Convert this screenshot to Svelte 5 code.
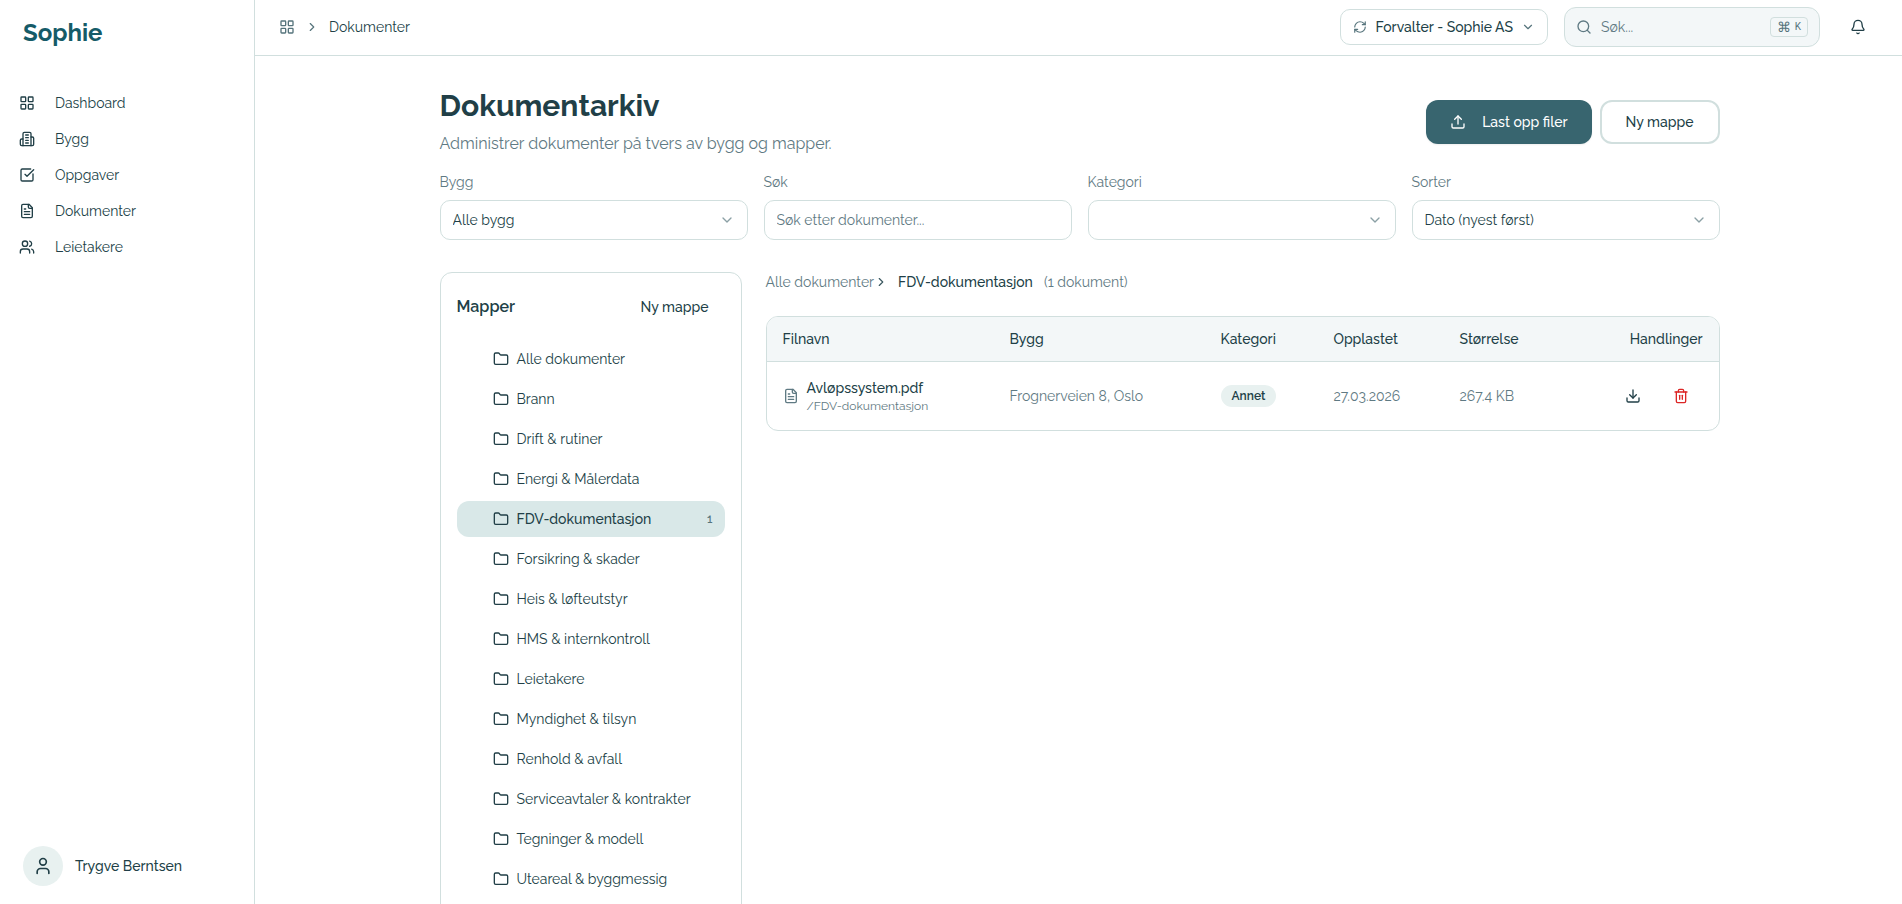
<script>
  const icons = {
    grid: '<rect width="7" height="7" x="3" y="3" rx="1"/><rect width="7" height="7" x="14" y="3" rx="1"/><rect width="7" height="7" x="14" y="14" rx="1"/><rect width="7" height="7" x="3" y="14" rx="1"/>',
    building: '<path d="M6 22V4a2 2 0 0 1 2-2h8a2 2 0 0 1 2 2v18Z"/><path d="M6 12H4a2 2 0 0 0-2 2v6a2 2 0 0 0 2 2h2"/><path d="M18 9h2a2 2 0 0 1 2 2v9a2 2 0 0 1-2 2h-2"/><path d="M10 6h4"/><path d="M10 10h4"/><path d="M10 14h4"/><path d="M10 18h4"/>',
    check: '<path d="M21 10.5V19a2 2 0 0 1-2 2H5a2 2 0 0 1-2-2V5a2 2 0 0 1 2-2h12.5"/><path d="m9 11 3 3L22 4"/>',
    file: '<path d="M15 2H6a2 2 0 0 0-2 2v16a2 2 0 0 0 2 2h12a2 2 0 0 0 2-2V7Z"/><path d="M14 2v4a2 2 0 0 0 2 2h4"/><path d="M10 9H8"/><path d="M16 13H8"/><path d="M16 17H8"/>',
    users: '<path d="M16 21v-2a4 4 0 0 0-4-4H6a4 4 0 0 0-4 4v2"/><circle cx="9" cy="7" r="4"/><path d="M22 21v-2a4 4 0 0 0-3-3.87"/><path d="M16 3.13a4 4 0 0 1 0 7.75"/>',
    user: '<path d="M19 21v-2a4 4 0 0 0-4-4H9a4 4 0 0 0-4 4v2"/><circle cx="12" cy="7" r="4"/>',
    right: '<path d="m9 18 6-6-6-6"/>',
    down: '<path d="m6 9 6 6 6-6"/>',
    refresh: '<path d="M3 12a9 9 0 0 1 9-9 9.75 9.75 0 0 1 6.74 2.74L21 8"/><path d="M21 3v5h-5"/><path d="M21 12a9 9 0 0 1-9 9 9.75 9.75 0 0 1-6.74-2.74L3 16"/><path d="M8 16H3v5"/>',
    search: '<circle cx="11" cy="11" r="8"/><path d="m21 21-4.3-4.3"/>',
    bell: '<path d="M10.268 21a2 2 0 0 0 3.464 0"/><path d="M3.262 15.326A1 1 0 0 0 4 17h16a1 1 0 0 0 .74-1.673C19.41 13.956 18 12.499 18 8A6 6 0 0 0 6 8c0 4.499-1.411 5.956-2.738 7.326"/>',
    upload: '<path d="M21 15v4a2 2 0 0 1-2 2H5a2 2 0 0 1-2-2v-4"/><path d="m17 8-5-5-5 5"/><path d="M12 3v12"/>',
    download: '<path d="M21 15v4a2 2 0 0 1-2 2H5a2 2 0 0 1-2-2v-4"/><path d="m7 10 5 5 5-5"/><path d="M12 15V3"/>',
    folder: '<path d="M20 20a2 2 0 0 0 2-2V8a2 2 0 0 0-2-2h-7.9a2 2 0 0 1-1.69-.9L9.6 3.9A2 2 0 0 0 7.93 3H4a2 2 0 0 0-2 2v13a2 2 0 0 0 2 2Z"/>',
    trash: '<path d="M3 6h18"/><path d="M19 6v14a2 2 0 0 1-2 2H7a2 2 0 0 1-2-2V6"/><path d="M8 6V4a2 2 0 0 1 2-2h4a2 2 0 0 1 2 2v2"/><path d="M10 11v6"/><path d="M14 11v6"/>'
  };

  const nav = [
    ['grid', 'Dashboard'],
    ['building', 'Bygg'],
    ['check', 'Oppgaver'],
    ['file', 'Dokumenter'],
    ['users', 'Leietakere']
  ];

  const folders = [
    'Alle dokumenter', 'Brann', 'Drift & rutiner', 'Energi & Målerdata', 'FDV-dokumentasjon',
    'Forsikring & skader', 'Heis & løfteutstyr', 'HMS & internkontroll', 'Leietakere',
    'Myndighet & tilsyn', 'Renhold & avfall', 'Serviceavtaler & kontrakter',
    'Tegninger & modell', 'Uteareal & byggmessig'
  ];

  let selected = $state('FDV-dokumentasjon');
</script>

{#snippet icon(name, size = 16)}
  <svg class="icon" width={size} height={size} viewBox="0 0 24 24" aria-hidden="true">{@html icons[name]}</svg>
{/snippet}

{#snippet dropdown(id, label, value)}
  <div class="field">
    <label for={id}>{label}</label>
    <div class="select">
      <select {id}><option>{value}</option></select>
      {@render icon('down')}
    </div>
  </div>
{/snippet}

<div class="app">
  <aside class="sidebar">
    <a class="logo" href="#top">Sophie</a>
    <nav>
      {#each nav as [name, label]}
        <a href="#{label}">{@render icon(name)}<span>{label}</span></a>
      {/each}
    </nav>
    <button class="account">
      <span class="avatar">{@render icon('user', 20)}</span>
      <span>Trygve Berntsen</span>
    </button>
  </aside>

  <div class="page">
    <header class="topbar">
      <div class="trail">
        <a href="#home" aria-label="Dashboard">{@render icon('grid')}</a>
        {@render icon('right', 14)}
        <span>Dokumenter</span>
      </div>
      <div class="tools">
        <button class="role">{@render icon('refresh', 14)}<span>Forvalter - Sophie AS</span>{@render icon('down', 14)}</button>
        <button class="search">
          {@render icon('search')}
          <span class="hint">Søk...</span>
          <kbd><span>⌘</span>K</kbd>
        </button>
        <button class="bell" aria-label="Varsler">{@render icon('bell')}</button>
      </div>
    </header>

    <main>
      <div class="content">
        <div class="heading">
          <div>
            <h1>Dokumentarkiv</h1>
            <p>Administrer dokumenter på tvers av bygg og mapper.</p>
          </div>
          <div class="actions">
            <button class="primary">{@render icon('upload')}<span>Last opp filer</span></button>
            <button class="outline">Ny mappe</button>
          </div>
        </div>

        <div class="filters">
          {@render dropdown('building', 'Bygg', 'Alle bygg')}
          <div class="field">
            <label for="query">Søk</label>
            <input id="query" type="text" placeholder="Søk etter dokumenter..." />
          </div>
          {@render dropdown('category', 'Kategori', '')}
          {@render dropdown('sort', 'Sorter', 'Dato (nyest først)')}
        </div>

        <div class="columns">
          <section class="folders">
            <div class="folders-head">
              <h2>Mapper</h2>
              <button>Ny mappe</button>
            </div>
            <ul>
              {#each folders as name}
                <li>
                  <button class:active={selected === name} onclick={() => (selected = name)}>
                    {@render icon('folder')}
                    <span class="name">{name}</span>
                    {#if name === 'FDV-dokumentasjon'}<span class="count">1</span>{/if}
                  </button>
                </li>
              {/each}
            </ul>
          </section>

          <section class="documents">
            <div class="path">
              <a href="#all">Alle dokumenter</a>
              {@render icon('right', 14)}
              <span class="current">{selected}</span>
              <span>(1 dokument)</span>
            </div>
            <div class="table-card">
              <table>
                <colgroup>
                  <col class="c-name" /><col class="c-building" /><col class="c-category" />
                  <col class="c-date" /><col class="c-size" /><col />
                </colgroup>
                <thead>
                  <tr>
                    <th>Filnavn</th><th>Bygg</th><th>Kategori</th><th>Opplastet</th><th>Størrelse</th>
                    <th class="end">Handlinger</th>
                  </tr>
                </thead>
                <tbody>
                  <tr>
                    <td>
                      <div class="file">
                        {@render icon('file')}
                        <div><strong>Avløpssystem.pdf</strong><small>/FDV-dokumentasjon</small></div>
                      </div>
                    </td>
                    <td>Frognerveien 8, Oslo</td>
                    <td><span class="badge">Annet</span></td>
                    <td>27.03.2026</td>
                    <td>267.4 KB</td>
                    <td>
                      <div class="row-actions">
                        <button aria-label="Last ned">{@render icon('download')}</button>
                        <button class="danger" aria-label="Slett">{@render icon('trash')}</button>
                      </div>
                    </td>
                  </tr>
                </tbody>
              </table>
            </div>
          </section>
        </div>
      </div>
    </main>
  </div>
</div>

<style>
  :global(body) { margin: 0; }
  .app {
    --ink: #213f47;
    --muted: #5f7a83;
    --line: #d1dfde;
    --soft: #f3f7f8;
    display: flex;
    height: 100vh;
    overflow: hidden;
    background: #fff;
    color: var(--ink);
    font: 400 14px/20px Raleway, Lato, sans-serif;
  }
  .app :global(*) { box-sizing: border-box; }
  button, input, select { font: inherit; color: inherit; margin: 0; }
  button { display: flex; align-items: center; border: 0; background: none; padding: 0; cursor: pointer; }
  a { color: inherit; text-decoration: none; }
  .icon { flex: none; display: block; fill: none; stroke: currentColor; stroke-width: 2; stroke-linecap: round; stroke-linejoin: round; }

  .sidebar { flex: none; width: 255px; display: flex; flex-direction: column; border-right: 1px solid var(--line); }
  .logo { padding: 17px 23px 0; font-size: 24px; line-height: 32px; font-weight: 700; color: #155b68; }
  nav { display: flex; flex-direction: column; padding-top: 36px; }
  nav a { display: flex; align-items: center; gap: 20px; height: 36px; padding-left: 19px; }
  .account { margin-top: auto; padding: 0 23px 18px; gap: 12px; font-weight: 500; }
  .avatar { display: grid; place-items: center; width: 40px; height: 40px; border-radius: 50%; background: #e8f1f0; }

  .page { flex: 1; min-width: 0; display: flex; flex-direction: column; }
  .topbar { flex: none; display: flex; align-items: center; justify-content: space-between; height: 56px; padding: 0 28px 2px 24px; border-bottom: 1px solid var(--line); }
  .trail { display: flex; align-items: center; gap: 10px; }
  .trail a, .trail .icon { color: #56747c; }
  .tools { display: flex; align-items: center; gap: 16px; }
  .role { height: 36px; padding: 0 12px; gap: 8px; border: 1px solid var(--line); border-radius: 10px; font-weight: 500; }
  .role .icon { color: #56747c; }
  .search { width: 256px; height: 40px; padding: 0 11px; gap: 9px; border: 1px solid var(--line); border-radius: 12px; background: var(--soft); color: var(--muted); }
  .hint { flex: 1; text-align: left; }
  kbd { display: flex; align-items: center; gap: 4px; height: 20px; padding: 0 6px; border: 1px solid var(--line); border-radius: 4px; font: 400 10px/18px Roboto, "Liberation Sans", sans-serif; color: #56747c; }
  kbd span { font: 400 14px/18px Raleway, Lato, sans-serif; }
  .bell { justify-content: center; width: 32px; height: 36px; margin-left: 6px; }

  main { flex: 1; min-height: 0; overflow: hidden; padding: 32px 24px 24px 26px; }
  .content { max-width: 1280px; margin: 0 auto; }
  .heading { display: flex; align-items: center; justify-content: space-between; }
  h1 { margin: 0; font-size: 30px; line-height: 36px; font-weight: 700; }
  p { margin: 8px 0 0; font-size: 16px; line-height: 24px; color: var(--muted); }
  .actions { display: flex; gap: 8px; }
  .actions button { height: 44px; padding: 0 24px; border-radius: 12px; font-weight: 500; }
  .actions .primary { gap: 16px; background: #38656f; color: #fff; box-shadow: 0 1px 2px #0001; }
  .actions .outline { border: 2px solid var(--line); }

  .filters { display: grid; grid-template-columns: repeat(4, 1fr); gap: 16px; margin-top: 16px; }
  .field { display: flex; flex-direction: column; gap: 8px; }
  .field label { color: var(--muted); }
  .field input, .field select { width: 100%; height: 40px; padding: 0 12px; border: 1px solid var(--line); border-radius: 10px; background: #fff; outline: 0; appearance: none; }
  .field input::placeholder { color: var(--muted); opacity: 1; }
  .select { display: grid; align-items: center; }
  .select > select, .select > :global(.icon) { grid-area: 1 / 1; }
  .select > :global(.icon) { justify-self: end; margin-right: 13px; color: #8ba0a5; pointer-events: none; }

  .columns { display: grid; grid-template-columns: 302px minmax(0, 1fr); gap: 24px; align-items: start; margin-top: 32px; }
  .folders { padding: 16px; border: 1px solid var(--line); border-radius: 12px; }
  .folders-head { display: flex; align-items: center; justify-content: space-between; height: 36px; }
  h2 { margin: 0; font-size: 16px; line-height: 24px; font-weight: 600; }
  .folders-head button { padding: 0 16px; height: 36px; font-weight: 500; }
  ul { list-style: none; margin: 16px 0 0; padding: 0 0 10px; display: flex; flex-direction: column; gap: 4px; }
  li button { width: 100%; height: 36px; padding: 0 12px 0 36px; gap: 8px; border-radius: 12px; }
  .name { flex: 1; text-align: left; }
  li .active { background: #d9e8e8; font-weight: 500; }
  .count { font-size: 12px; color: #56747c; }

  .path { display: flex; align-items: center; height: 20px; color: var(--muted); }
  .path .icon { color: #3b5860; margin-right: 10px; }
  .path .current { color: var(--ink); font-weight: 500; margin-right: 11px; }
  .table-card { margin-top: 24px; border: 1px solid var(--line); border-radius: 12px; overflow: hidden; }
  table { width: 100%; border-spacing: 0; table-layout: fixed; }
  .c-name { width: 227px; }
  .c-building { width: 211px; }
  .c-category { width: 113px; }
  .c-date { width: 126px; }
  .c-size { width: 126px; }
  th { height: 45px; padding: 0 16px; text-align: left; font-weight: 500; background: var(--soft); border-bottom: 1px solid var(--line); }
  th.end { text-align: right; }
  td { height: 68px; padding: 0 16px; color: var(--muted); }
  .file { display: flex; align-items: center; gap: 8px; }
  strong { display: block; color: var(--ink); font-weight: 500; line-height: 20px; }
  small { display: block; font-size: 12px; line-height: 16px; }
  .badge { display: inline-block; padding: 3px 11px; border-radius: 12px; background: #e8f1f0; color: var(--ink); font-size: 12px; line-height: 16px; font-weight: 600; }
  .row-actions { display: flex; justify-content: flex-end; gap: 4px; }
  .row-actions button { justify-content: center; width: 44px; height: 36px; color: var(--ink); }
  .row-actions .danger { color: #dc2626; }
</style>
